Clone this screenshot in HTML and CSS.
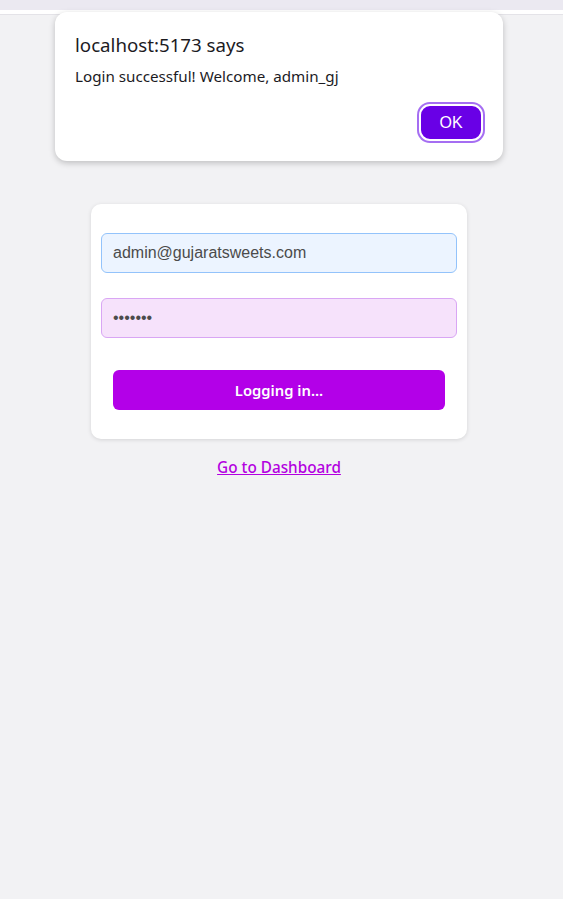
FILE: index.html
```html
<!DOCTYPE html>
<html lang="en">
<head>
<meta charset="utf-8">
<title>Login</title>
<link rel="stylesheet" href="styles.css">
</head>
<body>
<div class="topbar"></div>
<div class="topline"></div>
<main class="page">
  <form class="card">
    <input class="field field-email" type="email" value="admin@gujaratsweets.com">
    <input class="field field-pass" type="password" value="1234567">
    <button class="submit" type="button">Logging in...</button>
  </form>
  <a class="dash-link" href="#">Go to Dashboard</a>
</main>
<div class="dialog">
  <div class="dialog-title">localhost:5173 says</div>
  <div class="dialog-msg">Login successful! Welcome, admin_gj</div>
  <div class="dialog-actions"><button class="dialog-ok" type="button">OK</button></div>
</div>
</body>
</html>
```
FILE: styles.css
```css
* { box-sizing: border-box; }
html, body { margin: 0; padding: 0; }
body {
  background: #f2f2f4;
  font-family: "Noto Sans", "DejaVu Sans", sans-serif;
  width: 563px;
  height: 899px;
  overflow: hidden;
  position: relative;
}
.topbar { height: 10px; background: #ebe9f1; }
.topline { height: 5px; background: #ffffff; border-bottom: 1px solid #e4e3e8; }
.page {
  width: 558px;
  display: flex;
  flex-direction: column;
  align-items: center;
  padding-top: 189px;
}
.card {
  width: 376px;
  background: #ffffff;
  border-radius: 10px;
  box-shadow: 0 1px 4px rgba(0,0,0,0.12);
  padding: 29px 10px 29px 10px;
  display: flex;
  flex-direction: column;
}
.field {
  height: 40px;
  width: 100%;
  border-radius: 6px;
  padding: 0 11px;
  font-family: "Liberation Sans", Arial, sans-serif;
  font-size: 16px;
  color: #4b4b4b;
  outline: none;
}
.field-email { background: #ecf4ff; border: 1px solid #93c3fb; }
.field-pass { background: #f6e2fb; border: 1px solid #d9a6f4; margin-top: 25px; }
.submit {
  margin: 32px 12px 0 12px;
  height: 40px;
  border: none;
  border-radius: 6px;
  background: #b300e8;
  color: #ffffff;
  font-family: "Noto Sans", sans-serif;
  font-weight: 600;
  font-size: 14.8px;
}
.dash-link {
  margin-top: 18px;
  color: #b300e0;
  font-size: 15.3px;
  font-weight: 500;
  text-decoration: underline;
}
.dialog {
  position: absolute;
  left: 55px;
  top: 12px;
  width: 448px;
  height: 149px;
  background: #ffffff;
  border-radius: 12px;
  box-shadow: 0 2px 6px rgba(0,0,0,0.22);
  padding: 22px 20px 0 20px;
}
.dialog-title { font-size: 18.7px; color: #1c1b1f; line-height: 22px; }
.dialog-msg { margin-top: 9px; font-size: 15.2px; color: #1c1b1f; line-height: 22px; }
.dialog-actions { display: flex; justify-content: flex-end; margin-top: 17px; }
.dialog-ok {
  width: 64px;
  height: 37px;
  border-radius: 11px;
  background: #6900e6;
  color: #ffffff;
  border: 2px solid #ffffff;
  box-shadow: 0 0 0 2px #a56ef2;
  font-family: "Liberation Sans", Arial, sans-serif;
  font-size: 16px;
  margin-right: 0;
}
```
